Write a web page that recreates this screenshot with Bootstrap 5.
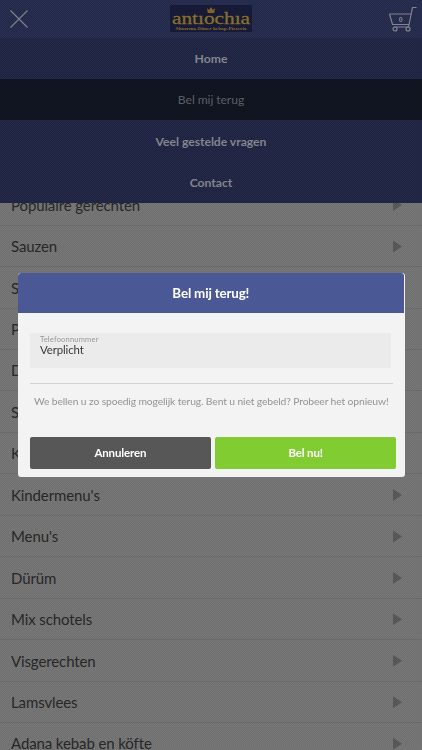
<!DOCTYPE html>
<html lang="nl">
<head>
<meta charset="utf-8">
<meta name="viewport" content="width=device-width, initial-scale=1">
<title>Antiochia</title>
<link href="https://cdn.jsdelivr.net/npm/bootstrap@5.3.0/dist/css/bootstrap.min.css" rel="stylesheet">
<style>
body{font-family:Lato,"Liberation Sans",sans-serif;background:#757575;height:750px;overflow:hidden}
.topbar{height:37.5px;background:#242b4e;z-index:2;padding:0 4px 0 9px}
.logo{width:82px;height:27px;margin-left:5px}
.menu{z-index:2;background:#202544}
.menu a{height:41.4px;font-size:12.2px;font-weight:700;color:#85868f;text-decoration:none;letter-spacing:-.04px;padding-top:2px}
.menu a.current{background:#0f131f;color:#5c5e65;font-weight:400;letter-spacing:-.1px}
.dishes{margin-top:-18.8px}
.dish{height:41.44px;border-bottom:1px solid #6b6b6b;padding:1px 20px 0 11px;font-size:15px;color:#262626;letter-spacing:-.11px;flex:none}
.arrow{width:9px;height:12px;background:#585858;clip-path:polygon(0 0,100% 50%,0 100%)}
.shade{z-index:3;background:repeating-conic-gradient(rgba(0,0,0,.035) 0 25%,rgba(255,255,255,.018) 0 50%) 0 0/2px 2px}
.callbox{left:17.5px;top:273px;width:387.5px;height:203.5px;z-index:4;background:#f3f3f3;border-radius:3px;overflow:hidden}
.callhead{height:40.3px;margin-right:1px;background:#4a5896;color:#fff;font-size:13.4px;font-weight:700;letter-spacing:-.17px;border-radius:3px 3px 0 0}
.phone{margin:20px 14.5px 0 12.5px;height:35px;background:#ebebeb;padding:3px 10px;line-height:1}
.phone label{font-size:7.5px;line-height:8px;color:#999;letter-spacing:.2px}
.phone span{font-size:11.4px;line-height:11px;color:#383838;letter-spacing:-.1px}
.rule{height:1px;background:#d2d2d2;margin:15px 12px 0 12px}
.note{font-size:10.3px;line-height:14px;color:#949494;letter-spacing:-.115px;margin-top:9.5px;white-space:nowrap}
.actions{margin:29.3px 9px 0 12.5px;gap:4.5px}
.actions .btn{height:31.5px;padding:0;border:0;border-radius:2px;color:#fff;font-size:11.5px;font-weight:700;letter-spacing:-.15px}
.actions .cancel{background:#575757}
.actions .call{background:#81cc30}
</style>
<script src="https://cdn.jsdelivr.net/npm/bootstrap@5.3.0/dist/js/bootstrap.bundle.min.js"></script>
</head>
<body>
<header class="topbar position-relative d-flex justify-content-between align-items-center">
  <svg width="20" height="20" viewBox="0 0 20 20" fill="none" stroke="#808187" stroke-width="1.2"><path d="M1.5 1.5 18.5 18.5M18.5 1.5 1.5 18.5"/></svg>
  <svg class="logo d-block" viewBox="0 0 82 27"><rect width="82" height="27" fill="#151936"/><path d="M37 3l2 2 2-3 2 3 2-2-.8 5h-6.4z" fill="#896325"/>
    <text x="41" y="19" text-anchor="middle" textLength="78" lengthAdjust="spacingAndGlyphs" font-family="Liberation Serif,serif" font-size="17" fill="#8b702c" stroke="#8b702c" stroke-width=".3">antıochıa</text>
    <text x="41" y="25.2" text-anchor="middle" textLength="71" lengthAdjust="spacingAndGlyphs" font-family="Liberation Serif,serif" font-weight="700" font-size="5" fill="#886c2d">Shoarma-Döner kebap-Pizzeria</text></svg>
  <svg width="30" height="28" viewBox="0 0 30 28" fill="none" stroke="#85868e" stroke-width="1.2"><path d="M28.5 2.5h-4L20.5 22H6M1.5 9H23M1.5 9 4.5 19.5h16.4"/><circle cx="7" cy="24" r="2"/><circle cx="20" cy="24" r="2"/><text x="12.8" y="16.5" text-anchor="middle" font-family="Liberation Sans,sans-serif" font-size="7" font-weight="700" fill="#85868e" stroke="none">0</text></svg>
</header>
<nav class="menu position-relative d-flex flex-column">
  <a href="#" class="d-flex align-items-center justify-content-center">Home</a>
  <a href="#" class="current d-flex align-items-center justify-content-center">Bel mij terug</a>
  <a href="#" class="d-flex align-items-center justify-content-center">Veel gestelde vragen</a>
  <a href="#" class="d-flex align-items-center justify-content-center">Contact</a>
</nav>
<main class="dishes d-flex flex-column">
  <div class="dish d-flex align-items-center justify-content-between">Populaire gerechten<i class="arrow"></i></div>
  <div class="dish d-flex align-items-center justify-content-between">Sauzen<i class="arrow"></i></div>
  <div class="dish d-flex align-items-center justify-content-between">S<i class="arrow"></i></div>
  <div class="dish d-flex align-items-center justify-content-between">P<i class="arrow"></i></div>
  <div class="dish d-flex align-items-center justify-content-between">D<i class="arrow"></i></div>
  <div class="dish d-flex align-items-center justify-content-between">S<i class="arrow"></i></div>
  <div class="dish d-flex align-items-center justify-content-between">K<i class="arrow"></i></div>
  <div class="dish d-flex align-items-center justify-content-between">Kindermenu's<i class="arrow"></i></div>
  <div class="dish d-flex align-items-center justify-content-between">Menu's<i class="arrow"></i></div>
  <div class="dish d-flex align-items-center justify-content-between">Dürüm<i class="arrow"></i></div>
  <div class="dish d-flex align-items-center justify-content-between">Mix schotels<i class="arrow"></i></div>
  <div class="dish d-flex align-items-center justify-content-between">Visgerechten<i class="arrow"></i></div>
  <div class="dish d-flex align-items-center justify-content-between">Lamsvlees<i class="arrow"></i></div>
  <div class="dish d-flex align-items-center justify-content-between">Adana kebab en köfte<i class="arrow"></i></div>
</main>
<div class="shade position-fixed top-0 start-0 w-100 h-100"></div>
<section class="callbox position-fixed" role="dialog">
  <div class="callhead d-flex align-items-center justify-content-center">Bel mij terug!</div>
  <div class="phone d-flex flex-column"><label>Telefoonnummer</label><span>Verplicht</span></div>
  <div class="rule"></div>
  <div class="note text-center">We bellen u zo spoedig mogelijk terug. Bent u niet gebeld? Probeer het opnieuw!</div>
  <div class="actions d-flex"><button class="btn cancel flex-fill w-50">Annuleren</button><button class="btn call flex-fill w-50">Bel nu!</button></div>
</section>
</body>
</html>
